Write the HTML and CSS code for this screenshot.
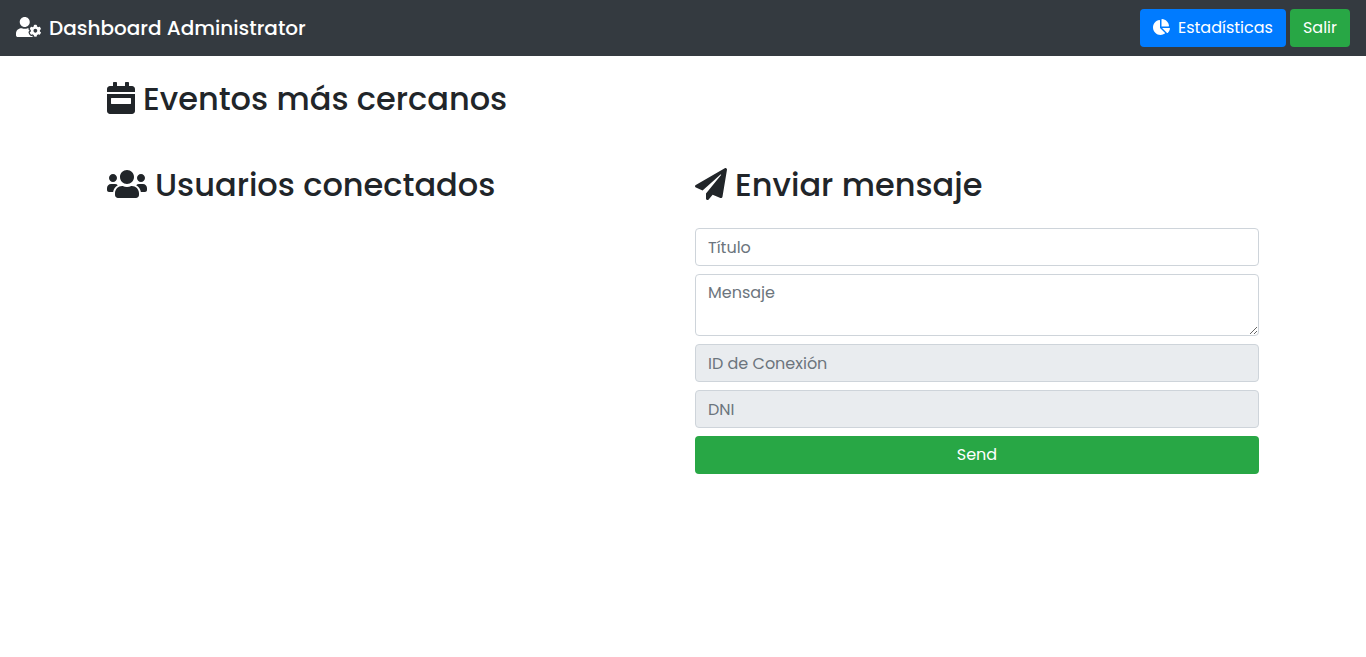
FILE: index.html
```html
<!DOCTYPE html>
<html lang="es">
<head>
<meta charset="utf-8">
<meta name="viewport" content="width=device-width, initial-scale=1">
<title>Dashboard Administrator</title>
<link rel="stylesheet" href="styles.css">
</head>
<body>
<header class="navbar">
  <a class="brand" href="#">
    <svg class="icon" viewBox="0 0 640 512" aria-hidden="true"><path d="M610.5 373.3c2.6-14.1 2.6-28.5 0-42.6l25.8-14.9c3-1.7 4.3-5.2 3.3-8.5-6.7-21.6-18.2-41.2-33.2-57.4-2.3-2.5-6-3.1-9-1.4l-25.8 14.9c-10.9-9.3-23.4-16.5-36.9-21.3v-29.8c0-3.4-2.4-6.4-5.7-7.1-22.3-5-45-4.8-66.2 0-3.3.7-5.7 3.7-5.7 7.1v29.8c-13.5 4.8-26 12-36.9 21.3l-25.8-14.9c-2.9-1.7-6.7-1.1-9 1.4-15 16.2-26.5 35.8-33.2 57.4-1 3.3.4 6.8 3.3 8.5l25.8 14.9c-2.6 14.1-2.6 28.5 0 42.6l-25.8 14.9c-3 1.7-4.3 5.2-3.3 8.5 6.7 21.6 18.2 41.1 33.2 57.4 2.3 2.5 6 3.1 9 1.4l25.8-14.9c10.9 9.3 23.4 16.5 36.9 21.3v29.8c0 3.4 2.4 6.4 5.7 7.1 22.3 5 45 4.8 66.2 0 3.3-.7 5.7-3.7 5.7-7.1v-29.8c13.5-4.8 26-12 36.9-21.3l25.8 14.9c2.9 1.7 6.7 1.1 9-1.4 15-16.2 26.5-35.8 33.2-57.4 1-3.3-.4-6.8-3.3-8.5l-25.8-14.9zM496 400.5c-26.8 0-48.5-21.8-48.5-48.5s21.8-48.5 48.5-48.5 48.5 21.8 48.5 48.5-21.7 48.5-48.5 48.5zM224 256c70.7 0 128-57.3 128-128S294.7 0 224 0 96 57.3 96 128s57.3 128 128 128zm201.2 226.5c-2.3-1.2-4.6-2.6-6.8-3.9l-7.9 4.6c-6 3.4-12.8 5.3-19.6 5.3-10.9 0-21.4-4.6-28.9-12.6-18.3-19.8-32.3-43.9-40.2-69.6-5.5-17.7 1.9-36.4 17.9-45.7l7.9-4.6c-.1-2.6-.1-5.2 0-7.8l-7.9-4.6c-16-9.2-23.4-28-17.9-45.7.9-2.9 2.2-5.8 3.2-8.7-3.8-.3-7.5-1.2-11.4-1.2h-16.7c-22.2 10.2-46.9 16-72.9 16s-50.6-5.8-72.9-16h-16.7C60.2 288 0 348.2 0 422.4V464c0 26.5 21.5 48 48 48h352c10.1 0 19.5-3.2 27.2-8.5-1.2-3.8-2-7.7-2-11.8v-9.2z"/></svg>
    <span>Dashboard Administrator</span>
  </a>
  <nav class="actions">
    <a class="btn btn-primary" href="#">
      <svg class="icon" viewBox="0 0 544 512" aria-hidden="true"><path d="M527.79 288H290.5l158.03 158.03c6.04 6.04 15.98 6.53 22.19.68 38.7-36.46 65.32-85.61 73.13-140.86 1.34-9.46-6.51-17.85-16.06-17.85zm-15.83-64.8C503.72 103.74 408.26 8.28 288.8.04 279.68-.59 272 7.1 272 16.24V240h223.77c9.14 0 16.82-7.68 16.19-16.8zM224 288V50.71c0-9.55-8.39-17.4-17.84-16.06C86.99 51.49-4.1 155.6.14 280.37 4.5 408.51 114.83 513.59 243.03 511.98c50.4-.63 96.97-16.87 135.26-44.03 7.9-5.6 8.42-17.23 1.57-24.08L224 288z"/></svg>
      <span>Estadísticas</span>
    </a>
    <button class="btn btn-success" type="button">Salir</button>
  </nav>
</header>
<main class="container">
  <section>
    <h2 class="title">
      <svg class="icon" viewBox="0 0 448 512" aria-hidden="true"><path fill-rule="evenodd" d="M0 464c0 26.500 21.500 48 48 48h352c26.500 0 48-21.500 48-48V192H0v272zM72 256h304c4.400 0 8 3.600 8 8v80c0 4.400-3.600 8-8 8H72c-4.400 0-8-3.600-8-8v-80c0-4.400 3.600-8 8-8zM400 64h-48V16c0-8.800-7.200-16-16-16h-32c-8.800 0-16 7.200-16 16v48H160V16c0-8.800-7.200-16-16-16h-32c-8.800 0-16 7.200-16 16v48H48C21.500 64 0 85.500 0 112v48h448v-48c0-26.500-21.500-48-48-48z"/></svg>
      <span>Eventos más cercanos</span>
    </h2>
  </section>
  <div class="columns">
    <section>
      <h2 class="title">
        <svg class="icon" viewBox="0 0 640 512" aria-hidden="true"><path d="M96 224c35.3 0 64-28.7 64-64s-28.7-64-64-64-64 28.700-64 64 28.700 64 64 64zm448 0c35.300 0 64-28.700 64-64s-28.700-64-64-64-64 28.700-64 64 28.700 64 64 64zm32 32h-64c-17.600 0-33.500 7.100-45.100 18.600 40.300 22.100 68.900 62 75.100 109.400h66c17.700 0 32-14.300 32-32v-32c0-35.300-28.700-64-64-64zm-256 0c61.900 0 112-50.100 112-112S381.900 32 320 32 208 82.100 208 144s50.100 112 112 112zm76.800 32h-8.300c-20.800 10-43.900 16-68.500 16s-47.600-6-68.500-16h-8.300C179.600 288 128 339.600 128 403.200V432c0 26.500 21.500 48 48 48h288c26.500 0 48-21.500 48-48v-28.800c0-63.600-51.600-115.200-115.200-115.200zm-223.700-13.400C161.500 263.100 145.600 256 128 256H64c-35.300 0-64 28.700-64 64v32c0 17.700 14.300 32 32 32h65.900c6.300-47.400 34.900-87.300 75.200-109.400z"/></svg>
        <span>Usuarios conectados</span>
      </h2>
    </section>
    <section>
      <h2 class="title">
        <svg class="icon" viewBox="0 0 512 512" aria-hidden="true"><path d="M476 3.2L12.5 270.6c-18.1 10.4-15.8 35.6 2.2 43.2L121 358.4l287.3-253.2c5.5-4.9 13.3 2.6 8.6 8.3L176 407v80.5c0 23.6 28.5 32.9 42.5 15.8L282 426l124.600 52.200c14.200 6 30.400-2.900 33-18.200l72-432C515 7.800 493.300-6.800 476 3.200z"/></svg>
        <span>Enviar mensaje</span>
      </h2>
      <form class="form">
        <input class="field" type="text" placeholder="Título" aria-label="Título">
        <textarea class="field message" rows="2" placeholder="Mensaje" aria-label="Mensaje"></textarea>
        <input class="field" type="text" placeholder="ID de Conexión" aria-label="ID de Conexión" disabled>
        <input class="field" type="text" placeholder="DNI" aria-label="DNI" disabled>
        <button class="btn btn-success" type="button">Send</button>
      </form>
    </section>
  </div>
</main>
</body>
</html>
```
FILE: styles.css
```css
*, *::before, *::after { box-sizing: border-box; }

body {
  margin: 0;
  background: #fff;
  color: #212529;
  font: 400 16px/24px Poppins, Inter, sans-serif;
}

.icon {
  height: 1em;
  flex: none;
  margin-bottom: 2px;
  fill: currentColor;
}

.navbar {
  display: flex;
  flex-wrap: wrap;
  align-items: center;
  justify-content: space-between;
  min-height: 56px;
  padding: 8px 16px;
  background: #343a40;
}

.brand {
  display: flex;
  align-items: center;
  gap: 8px;
  color: #fff;
  font-size: 20px;
  font-weight: 500;
  line-height: 30px;
  text-decoration: none;
}

.actions {
  display: flex;
  gap: 4px;
}

.btn {
  display: flex;
  align-items: center;
  justify-content: center;
  gap: 8px;
  padding: 6px 12px;
  border: 1px solid transparent;
  border-radius: 4px;
  color: #fff;
  font: inherit;
  text-decoration: none;
  cursor: pointer;
}

.btn-primary { background: #007bff; }
.btn-success { background: #28a745; }

.container {
  max-width: 1176px;
  margin: 0 auto;
  padding: 24px 12px;
}

.title {
  display: flex;
  align-items: center;
  gap: 8px;
  margin: 0;
  font-size: 32px;
  font-weight: 500;
  line-height: 38px;
}

.columns {
  display: grid;
  grid-template-columns: repeat(auto-fit, minmax(min(100%, 420px), 1fr));
  gap: 24px;
  margin-top: 48px;
}

.form {
  display: grid;
  gap: 8px;
  margin-top: 24px;
}

.field {
  display: block;
  width: 100%;
  height: 38px;
  padding: 6px 12px;
  border: 1px solid #ced4da;
  border-radius: 4px;
  background: #fff;
  color: #495057;
  font: inherit;
}

.field::placeholder {
  color: #6c757d;
  opacity: 1;
}

.field:disabled { background: #e9ecef; }

.message {
  height: 62px;
  resize: vertical;
}
```
